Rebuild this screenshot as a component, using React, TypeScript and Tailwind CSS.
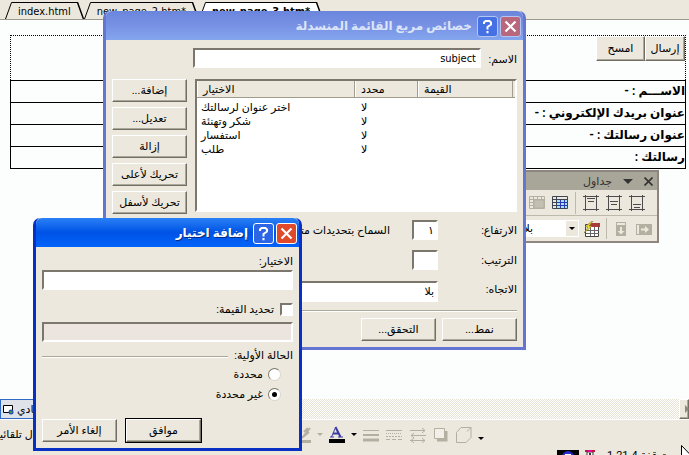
import type { ReactNode } from 'react';

const raised =
  'border border-t-white border-l-white border-r-[#716f64] border-b-[#716f64] shadow-[inset_-1px_-1px_0_#aca899]';
const sunkenEdge = 'border-2 border-t-[#7b776c] border-l-[#7b776c] border-r-white border-b-white';
const sunken = `${sunkenEdge} bg-white`;
const latin = "font-['DejaVu_Sans_Condensed','DejaVu_Sans',sans-serif]";

function Button({ children, primary }: { children: ReactNode; primary?: boolean }) {
  return (
    <button
      type="button"
      className={`flex h-[23px] w-[75px] shrink-0 items-center justify-center whitespace-nowrap bg-[#ece8dd] pt-px ${raised} ${
        primary ? 'outline outline-black' : ''
      }`}
    >
      {children}
    </button>
  );
}

function TitleBar({ title, active }: { title: string; active?: boolean }) {
  return (
    <div
      className={`flex h-[29px] items-center justify-end gap-[2px] rounded-t-[6px] pr-[2px] pt-px ${
        active
          ? 'bg-linear-to-b from-[#2a80f5] via-[#0052e6] to-[#0064fa]'
          : 'bg-linear-to-b from-[#6a86dc] via-[#7891e4] to-[#84a6ee]'
      }`}
    >
      <h2
        dir="rtl"
        className={`mr-[3px] whitespace-nowrap text-[12px] font-bold ${
          active ? 'text-white [text-shadow:1px_1px_0_#0a2a80]' : 'text-[#dbe4f8]'
        }`}
      >
        {title}
      </h2>
      <button
        type="button"
        aria-label="مساعدة"
        className={`flex size-[21px] items-center justify-center rounded-[3px] border ${
          active ? 'border-white bg-[#2c66e4]' : 'border-[#b5c5f2] bg-[#4671e4]'
        }`}
      >
        <svg viewBox="0 0 19 19" className="size-[19px]" fill="none" stroke="#fff" strokeWidth="2">
          <path d="M6 7V5.500L7.500 4h4L13 5.500v2L9.500 10v2.500M9.500 14v2.200" />
        </svg>
      </button>
      <button
        type="button"
        aria-label="إغلاق"
        className={`flex size-[21px] items-center justify-center rounded-[3px] border ${
          active ? 'border-white bg-[#e0492a]' : 'border-[#b5c5f2] bg-[#b8677c]'
        }`}
      >
        <svg viewBox="0 0 19 19" className="size-[19px]" stroke="#fff" strokeWidth="2.200">
          <path d="M4.500 4.500l10 10M14.500 4.500l-10 10" />
        </svg>
      </button>
    </div>
  );
}

function Tab({ label, current }: { label: string; current?: boolean }) {
  const fill = current ? '#ffffff' : '#ece8dd';
  return (
    <a href="#" className={`flex h-[17px] ${latin}`}>
      <svg viewBox="0 0 7 17" className="h-[17px] w-[7px]">
        <path d="M0 17L6.500.5H7V17z" fill={fill} />
        <path d="M.5 17L6.500.5H7" fill="none" stroke="#000" />
      </svg>
      <span
        className={`whitespace-nowrap border-t border-black px-[6px] leading-[18px] ${
          current ? 'bg-white font-bold' : 'bg-[#ece8dd]'
        }`}
      >
        {label}
      </span>
      <svg viewBox="0 0 7 17" className="h-[17px] w-[7px]">
        <path d="M0 .5h.5L6.500 17H0z" fill={fill} />
        <path d="M0 .5h.5L6.500 17" fill="none" stroke="#000" strokeWidth="1.500" />
      </svg>
    </a>
  );
}

const formRows = ['الاســـم : -', 'عنوان بريدك الإلكتروني : -', 'عنوان رسالتك : -', 'رسالتك :'];

function EditorPage() {
  return (
    <main dir="rtl" className="flex-1 bg-[#fcfefd] pl-[10px] pr-[3px] pt-[15px]">
      <form className="border border-b-0 border-dotted border-black">
        <div className="flex h-[44px] items-start">
          <button type="button" className={`h-[25px] w-[40px] bg-[#ece8dd] ${raised}`}>
            إرسال
          </button>
          <button type="button" className={`h-[25px] w-[49px] bg-[#ece8dd] ${raised}`}>
            امسح
          </button>
        </div>
      </form>
      <table className="w-full border-collapse text-[12px] font-bold leading-[21px]">
        <tbody>
          {formRows.map((row) => (
            <tr key={row}>
              <td className="h-[22px] border border-black p-0">{row}</td>
            </tr>
          ))}
        </tbody>
      </table>
    </main>
  );
}

function AlignIcon({ y }: { y: number }) {
  return (
    <svg viewBox="0 0 16 16" className="size-4" fill="none" stroke="#4c4c4c">
      <path d="M2.500 0v16M13.500 0v16M0 1.500h16M0 14.500h16" />
      <path d={`M4 ${y}.5h8M5 ${y + 3}.5h6`} />
    </svg>
  );
}

function TablesToolbar() {
  return (
    <section className="absolute left-[480px] top-[170px] w-[179px] border-2 border-[#8f857f] bg-[#ece8dd]">
      <div className="flex h-[18px] items-center justify-end gap-[11px] bg-[#a8a698] pr-1 text-[#333]">
        <span className="pt-[2px]">جداول</span>
        <svg viewBox="0 0 10 5" className="h-[5px] w-[10px]" fill="#333">
          <path d="M0 0h10L5 5z" />
        </svg>
        <svg viewBox="0 0 9 9" className="size-[9px]" stroke="#333" strokeWidth="1.600">
          <path d="M.5.5l8 8M8.500.5l-8 8" />
        </svg>
      </div>
      <div className="flex h-[26px] items-center justify-end gap-[7px] border-b border-[#bdb9ab] pr-[12px]">
        <svg viewBox="0 0 16 13" className="h-[13px] w-4" fill="none" stroke="#b3b0a2">
          <path d="M.5.5h15v12H.5zM.5 3.500h15M4.500.5v12M8.500.5v12M12.500.5v12M.5 6.500h15M.5 9.500h15" />
          <path d="M5 4h10v8H5z" fill="#c3c0b3" />
        </svg>
        <svg viewBox="0 0 16 13" className="h-[13px] w-4" fill="none" stroke="#3e4552">
          <path d="M4 3h11v9H4z" fill="#a4e4ee" stroke="none" />
          <path d="M.5.5h15v12H.5zM.5 3.500h15M4.500.5v12M.5 6.500h4M.5 9.500h4" />
          <path d="M8.500 4v8M12.500 4v8M5 6.500h10M5 9.500h10" stroke="#3038b0" />
        </svg>
        <span className="h-[22px] w-px bg-[#bdb9ab]" />
        <AlignIcon y={3} />
        <AlignIcon y={6} />
        <AlignIcon y={9} />
      </div>
      <div className="flex h-[25px] items-center justify-end gap-[6px] pr-[5px]">
        <select
          aria-label="تنسيق تلقائي"
          dir="rtl"
          className="h-[17px] flex-1 appearance-none bg-white pr-[46px]"
          defaultValue="بلا"
        >
          <option>بلا</option>
        </select>
        <span className="-ml-[19px] flex h-[15px] w-[12px] items-center justify-center bg-[#ece8dd]">
          <svg viewBox="0 0 6 3" className="h-[3px] w-[6px]">
            <path d="M0 0h6L3 3z" />
          </svg>
        </span>
        <svg viewBox="0 0 16 16" className="size-4" fill="none">
          <path d="M1.500 3.500h13v12h-13z" fill="#fff" stroke="#444" />
          <path d="M5 2h11v4H5z" fill="#a83c38" />
          <path d="M2 9.500h13M2 12.500h13M6.500 6v9M10.500 6v9" stroke="#666" />
          <path d="M8 0L1 6h3L0 12l8-7H5l4-5z" fill="#f5e12c" stroke="#77702a" strokeWidth=".6" />
        </svg>
        <span className="h-[21px] w-px bg-[#bdb9ab]" />
        <svg viewBox="0 0 16 16" className="mr-px size-4" fill="#b3b0a2">
          <path d="M3 1h10v14H3z" />
          <path d="M4 2h8v2H4zM7 6h2v4h2.500L8 13.500 4.500 10H7z" fill="#ece8dd" />
        </svg>
        <svg viewBox="0 0 16 16" className="size-4" fill="#b3b0a2">
          <path d="M0 3h16v11H0z" />
          <path d="M1 4h2v9H1zM5 7.500h4V5L13 8.500 9 12V9.500H5z" fill="#ece8dd" />
        </svg>
      </div>
    </section>
  );
}

const options = ['اختر عنوان لرسالتك', 'شكر وتهنئة', 'استفسار', 'طلب'];
const th =
  'h-[17px] border-b border-r border-[#a09c8e] bg-[#ece8dd] p-0 pl-[6px] pt-[2px] text-left font-normal shadow-[inset_1px_0_0_#fff]';

function PropertiesDialog() {
  return (
    <section className="absolute left-[103px] top-[11px] w-[423px] rounded-t-[7px] border-x-3 border-b-3 border-[#6575d2] bg-[#ece8dd]">
      <TitleBar title="خصائص مربع القائمة المنسدلة" />
      <div dir="rtl" className="flex flex-col pb-[6px] pl-[6px] pr-[6px] pt-2">
        <div className="flex items-center gap-[3px]">
          <label htmlFor="name" className="w-[33px] whitespace-nowrap pt-1">
            الاسم:
          </label>
          <input
            id="name"
            dir="ltr"
            defaultValue="subject"
            className={`h-[20px] w-[288px] pr-[3px] text-right ${latin} ${sunken}`}
          />
        </div>
        <div className="mt-[11px] flex justify-between">
          <div dir="ltr" className={`h-[133px] w-[322px] ${sunken}`}>
            <table className="w-full table-fixed border-separate border-spacing-0 leading-[14px]">
              <thead>
                <tr>
                  <th className={`w-[158px] ${th}`}>الاختيار</th>
                  <th className={`w-[63px] ${th}`}>محدد</th>
                  <th className={`w-[95px] ${th}`}>القيمة</th>
                  <th className="border-b border-[#a09c8e] bg-[#ece8dd] p-0" />
                </tr>
              </thead>
              <tbody>
                <tr className="h-[3px]" />
                {options.map((option) => (
                  <tr key={option}>
                    <td className="h-[14px] p-0 pl-1">{option}</td>
                    <td className="p-0 pl-[6px]">لا</td>
                    <td />
                    <td />
                  </tr>
                ))}
              </tbody>
            </table>
          </div>
          <div className="flex flex-col gap-[5px]">
            <Button>إضافة...</Button>
            <Button>تعديل...</Button>
            <Button>إزالة</Button>
            <Button>تحريك لأعلى</Button>
            <Button>تحريك لأسفل</Button>
          </div>
        </div>
        <div className="mt-[6px] flex items-center">
          <label htmlFor="height" className="w-[79px] pt-[2px]">
            الارتفاع:
          </label>
          <input id="height" defaultValue="١" className={`h-[20px] w-[26px] px-[2px] ${sunken}`} />
          <span className="mr-[22px] whitespace-nowrap pt-[2px]">السماح بتحديدات متعددة:</span>
        </div>
        <div className="mt-[10px] flex items-center">
          <label htmlFor="order" className="w-[79px] pt-[2px]">
            الترتيب:
          </label>
          <input id="order" className={`h-[20px] w-[26px] ${sunken}`} />
        </div>
        <div className="mt-[11px] flex items-start">
          <label htmlFor="direction" className="w-[79px] pt-[2px]">
            الاتجاه:
          </label>
          <select
            id="direction"
            defaultValue="بلا"
            className={`h-[21px] w-[240px] appearance-none px-[2px] ${sunken}`}
          >
            <option>بلا</option>
          </select>
        </div>
        <hr className="mt-[8px] border-t border-[#aca899] shadow-[0_1px_0_#fff]" />
        <div className="mt-[7px] flex gap-[6px]">
          <Button>نمط...</Button>
          <Button>التحقق...</Button>
        </div>
      </div>
    </section>
  );
}

const control = 'grid size-[13px] shrink-0 appearance-none place-items-center bg-white';
const radio = `${control} rounded-full border border-t-[#7b776c] border-l-[#7b776c] border-r-[#d8d4c8] border-b-[#d8d4c8] before:size-[5px] before:rounded-full checked:before:bg-black`;

function AddChoiceDialog() {
  return (
    <section className="absolute left-[33px] top-[218px] w-[269px] rounded-t-[7px] border-x-3 border-b-3 border-[#0831c4] bg-[#ece8dd]">
      <TitleBar title="إضافة اختيار" active />
      <div dir="rtl" className="flex flex-col px-[6px] pb-[6px] pt-[7px]">
        <label htmlFor="choice" className="leading-[16px]">
          الاختيار:
        </label>
        <input id="choice" className={`h-[20px] w-full ${sunken}`} />
        <label className="mt-[11px] flex h-[16px] items-center gap-[6px]">
          <input type="checkbox" className={`${control} ${sunkenEdge}`} />
          <span className="pt-[2px]">تحديد القيمة:</span>
        </label>
        <input disabled aria-label="القيمة" className={`mt-[5px] h-[20px] w-full bg-[#ece4de] ${sunkenEdge}`} />
        <fieldset>
          <legend className="flex w-full items-center gap-[6px] pt-[6px] leading-[16px]">
            الحالة الأولية:
            <span className="h-px flex-1 bg-[#aca899] shadow-[0_1px_0_#fff]" />
          </legend>
          <label className="mt-[2px] flex h-[16px] items-center gap-[5px] pr-[12px]">
            <input type="radio" name="state" className={radio} />
            <span className="pt-[2px]">محددة</span>
          </label>
          <label className="mt-[4px] flex h-[16px] items-center gap-[5px] pr-[12px]">
            <input type="radio" name="state" defaultChecked className={radio} />
            <span className="pt-[2px]">غير محددة</span>
          </label>
        </fieldset>
        <div dir="ltr" className="mt-[17px] flex gap-[9px]">
          <Button>إلغاء الأمر</Button>
          <Button primary>موافق</Button>
        </div>
      </div>
    </section>
  );
}

function Caret({ muted }: { muted?: boolean }) {
  return (
    <svg viewBox="0 0 6 3" className="h-[3px] w-[6px]" fill={muted ? '#b3b0a2' : '#000'}>
      <path d="M0 0h6L3 3z" />
    </svg>
  );
}

function DrawingBar() {
  return (
    <div className="flex h-[30px] shrink-0 items-center border-t border-white">
      <div className="w-[295px] shrink-0">
        <span dir="rtl" className="-ml-[6px] whitespace-nowrap">
          أشكال تلقائية
        </span>
      </div>
      <div className="flex items-center gap-[6px]">
        <svg viewBox="0 0 16 16" className="size-4" fill="none" stroke="#b3b0a2">
          <path d="M3 14.500h13" strokeWidth="3" />
          <path d="M5 11l3-1 7-9M8 10l6-5M9 5l4-4" strokeWidth="2" />
        </svg>
        <Caret muted />
        <svg viewBox="0 0 16 17" className="h-[17px] w-4">
          <path d="M0 13h16v4H0z" />
          <path d="M2.500 11L6.500 1.500" fill="none" stroke="#3a3aa4" />
          <path d="M6.500 1l5 10M4 7.500h6" fill="none" stroke="#3a3aa4" strokeWidth="2" />
          <path d="M1 11h4M9 11h5" stroke="#3a3aa4" />
        </svg>
        <Caret />
        <svg viewBox="0 0 16 16" className="size-4" stroke="#b3b0a2">
          <path d="M0 3.500h16" />
          <path d="M0 8h16" strokeWidth="2" />
          <path d="M0 13h16" strokeWidth="3" />
        </svg>
        <svg viewBox="0 0 16 16" className="mx-px size-4" stroke="#b3b0a2">
          <path d="M0 3.500h16" />
          <path d="M0 6.500h16" strokeDasharray="1 1" />
          <path d="M0 9.500h16" strokeDasharray="2 1" />
          <path d="M0 12.500h16" strokeDasharray="4 2" />
        </svg>
        <svg viewBox="0 0 16 16" className="mx-px size-4" fill="none" stroke="#b3b0a2">
          <path d="M0 3.500h15M12 1l3 2.500L12 6M1 8.500h15M4 6L1 8.500 4 11M0 13.500h15M12 11l3 2.500-3 2.500M4 11l-3 2.500L4 16" />
        </svg>
        <svg viewBox="0 0 16 16" className="size-4" fill="none" stroke="#b3b0a2">
          <path d="M13 4v9H4" strokeWidth="3" />
          <path d="M1.500 1.500h10v10h-10z" fill="#f2efe8" />
        </svg>
        <svg viewBox="0 0 17 17" className="size-[17px]" fill="none" stroke="#b3b0a2">
          <path d="M6 1.500h10v10l-5 5H1.500v-10zM12 5.500l4-4" />
        </svg>
        <span className="pt-2">
          <Caret />
        </span>
      </div>
    </div>
  );
}

export default function App() {
  return (
    <div className="relative flex h-screen w-full flex-col overflow-hidden bg-[#ece8dd] font-['Roboto','DejaVu_Sans',sans-serif] text-[11px] leading-[14px] text-black">
      <nav className="flex h-[20px] shrink-0 items-end border-b border-[#9c998e] pl-[5px]">
        <Tab label="index.html" />
        <Tab label="new_page_2.htm*" />
        <Tab label="new_page_3.htm*" current />
      </nav>
      <EditorPage />
      <div className="flex h-[20px] shrink-0 justify-between bg-[repeating-conic-gradient(#ffffff_0_25%,#e6e2d6_0_50%)] bg-[length:2px_2px]">
        <button
          type="button"
          className="flex w-[60px] items-center gap-[3px] border border-[#316ac5] bg-[#e0e2ea] pl-[2px]"
        >
          <svg viewBox="0 0 11 11" className="size-[11px]">
            <path d="M.5 1.500h9v7h-9z" fill="#fff" stroke="#000" />
            <circle cx="8" cy="8" r="2.500" fill="#2a50b0" />
            <path d="M7 7h2v2H7z" fill="#3c9a4a" />
          </svg>
          <span className="pt-[2px]">عادي</span>
        </button>
        <button type="button" aria-label="تمرير" className={`flex w-[10px] items-center bg-[#ece8dd] pl-[5px] ${raised}`}>
          <svg viewBox="0 0 4 8" className="h-2 w-1 shrink-0" fill="#8b887c">
            <path d="M0 0l4 4-4 4z" />
          </svg>
        </button>
      </div>
      <DrawingBar />
      <footer className="flex h-[6px] shrink-0 items-start justify-end overflow-hidden pr-[17px]">
        <svg viewBox="0 0 22 14" className="h-[14px] w-[22px] shrink-0">
          <path d="M0 1h22v13H0z" />
          <circle cx="11" cy="8" r="6" fill="#2a2ac8" />
          <path d="M8 5h6v3H8z" fill="#fff" />
        </svg>
        <svg viewBox="0 0 10 14" className="ml-[6px] h-[14px] w-[10px] shrink-0">
          <path d="M2 3h6v11H2z" fill="#fff" stroke="#333" />
          <path d="M0 1h10v2H0z" fill="#c0143c" />
          <path d="M3 1.500h4v1H3z" fill="#f0f" />
          <path d="M4 4h2v4H4z" fill="#333" />
        </svg>
        <span className="ml-[4px] w-[73px] whitespace-nowrap text-right leading-[14px]">1.21.4 متوقفة</span>
      </footer>
      <TablesToolbar />
      <PropertiesDialog />
      <AddChoiceDialog />
      <svg viewBox="0 0 12 19" className="absolute bottom-[-9px] right-[-4px] h-[19px] w-[12px]">
        <path d="M.5.5v15l3.500-3.500 2.500 6 2-1-2.500-5.500H11z" fill="#fff" stroke="#000" />
      </svg>
    </div>
  );
}
